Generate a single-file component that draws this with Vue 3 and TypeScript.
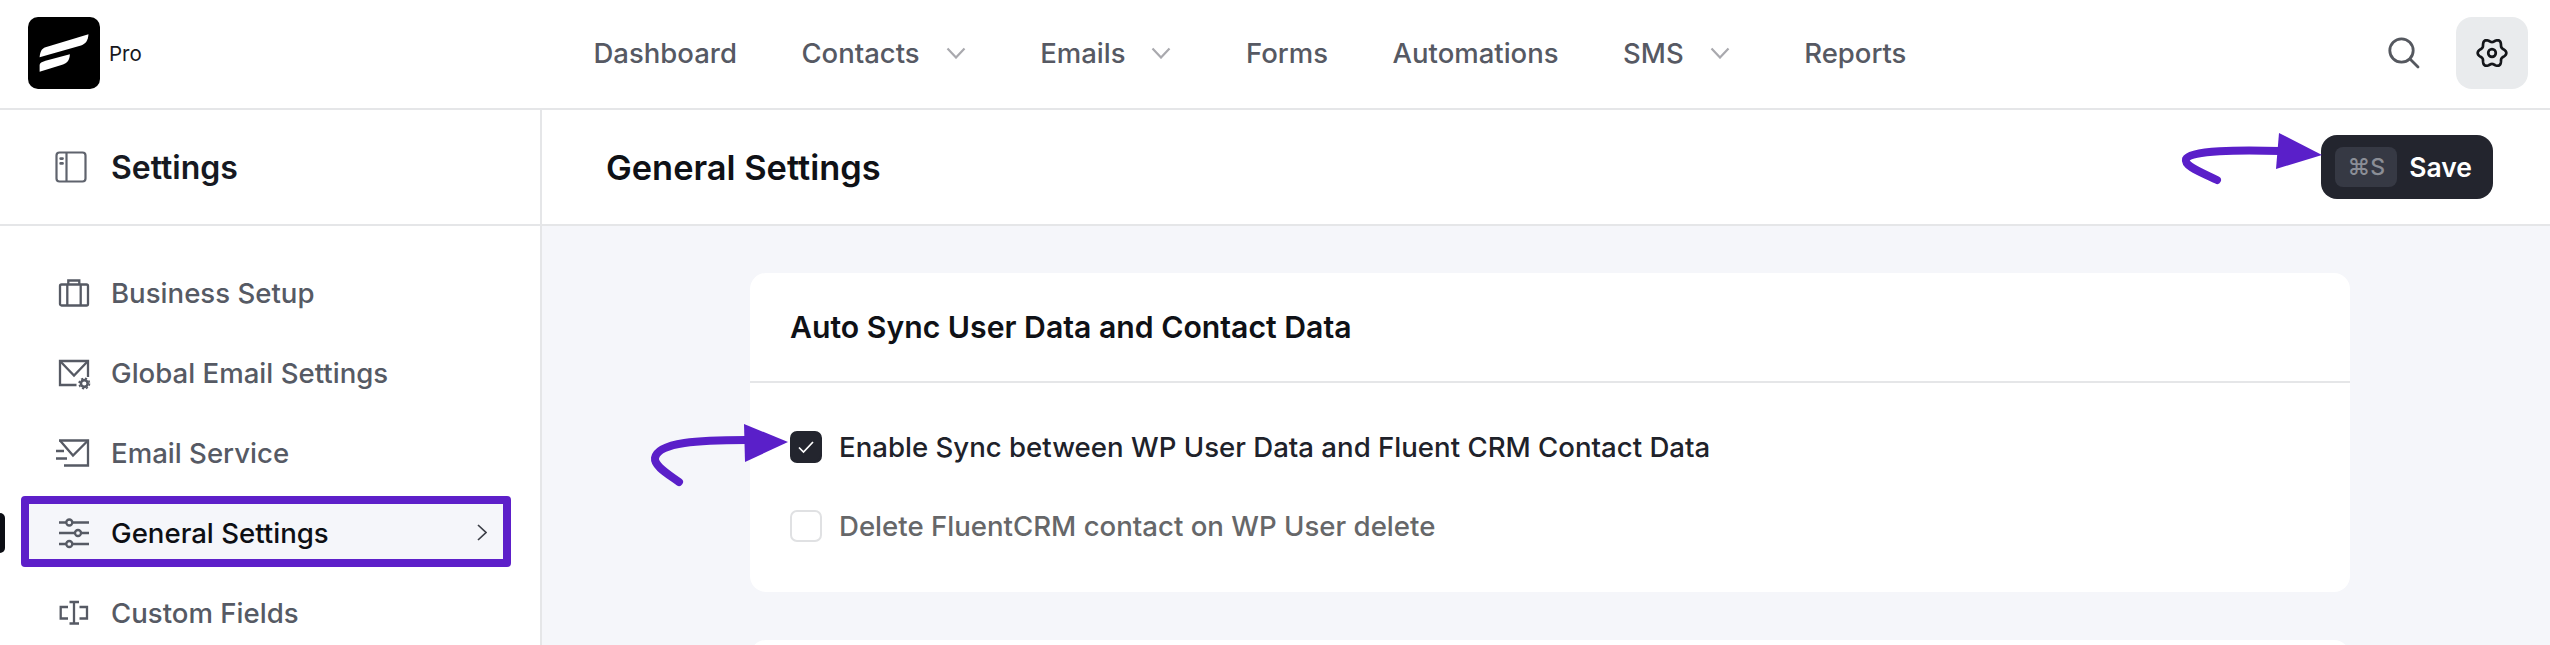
<script setup lang="ts">
interface NavItem { label: string; caret?: boolean }
const nav: NavItem[] = [
  { label: 'Dashboard' },
  { label: 'Contacts', caret: true },
  { label: 'Emails', caret: true },
  { label: 'Forms' },
  { label: 'Automations' },
  { label: 'SMS', caret: true },
  { label: 'Reports' },
]
const side = [
  { key: 'biz', label: 'Business Setup' },
  { key: 'mail', label: 'Global Email Settings' },
  { key: 'send', label: 'Email Service' },
  { key: 'gen', label: 'General Settings', active: true },
  { key: 'fields', label: 'Custom Fields' },
]
// Six-lobed cog outline of the settings button
const gearPath = Array.from({ length: 120 }, (_, i) => {
  const a = (i / 120) * Math.PI * 2
  const r = 12.6 + 1.7 * Math.cos(6 * a)
  return `${i ? 'L' : 'M'}${(16 + r * Math.cos(a)).toFixed(2)} ${(16 + r * Math.sin(a)).toFixed(2)}`
}).join('') + 'Z'
</script>

<template>
  <div class="page">
    <header class="top">
      <div class="brand">
        <svg class="logo" viewBox="28 17 72 72" width="72" height="72">
          <rect x="28" y="17" width="72" height="72" rx="10" fill="#000" />
          <path d="M39.6 57.3C40 52 41.5 48.5 45.5 47.2L88.5 34.3C88 40 86 44 81 45.5Z" fill="#fff" />
          <path d="M39.6 71.7V65C40 63 41.5 62 45.5 60.8L69.9 54.3C69.5 60 67.5 63 63 64.5Z" fill="#fff" />
        </svg>
        <span class="pro">Pro</span>
      </div>
      <nav class="nav">
        <a v-for="n in nav" :key="n.label" class="nav-item">
          <span>{{ n.label }}</span>
          <svg v-if="n.caret" class="caret" width="20" height="12" viewBox="0 0 20 12" fill="none">
            <path d="M1.5 1.5L10 10.5L18.5 1.5" stroke="#a9a9ae" stroke-width="2.2" />
          </svg>
        </a>
      </nav>
      <div class="tools">
        <svg class="search" width="32" height="32" viewBox="0 0 32 32" fill="none" stroke="#55585f" stroke-width="2.8">
          <circle cx="13.5" cy="13.5" r="11.7" />
          <path d="M22 22L30 30" stroke-linecap="round" />
        </svg>
        <button class="gear" type="button">
          <svg width="32" height="32" viewBox="0 0 32 32" fill="none" stroke="#14161a" stroke-width="2.7" stroke-linejoin="round">
            <path :d="gearPath" />
            <circle cx="16" cy="16" r="3.8" />
          </svg>
        </button>
      </div>
    </header>

    <div class="body">
      <aside class="sidebar">
        <div class="side-head">
          <svg width="32" height="32" viewBox="0 0 32 32" fill="none" stroke="#5f636d" stroke-width="2.2">
            <rect x="1.5" y="1.5" width="29" height="29" rx="3" />
            <path d="M11.5 2V30" />
            <path d="M5.6 7.6H7.6M5.6 12.4H7.6" stroke-width="2.6" stroke-linecap="round" />
          </svg>
          <span>Settings</span>
        </div>
        <ul class="side-list">
          <li v-for="s in side" :key="s.key" class="side-item" :class="{ active: s.active }">
            <span v-if="s.active" class="pill"></span>
            <svg class="side-icon" width="32" height="32" viewBox="0 0 32 32" fill="none" stroke="#565a64" stroke-width="2.3">
              <template v-if="s.key === 'biz'">
                <rect x="3" y="7.5" width="28" height="21" rx="1.5" />
                <path d="M11.3 7.5V3.5H22.3V7.5M10.3 7.5V28.5M23.7 7.5V28.5" />
              </template>
              <template v-else-if="s.key === 'mail'">
                <path d="M19.5 28H3V4H31V20" />
                <path d="M3 4L17 18.5L31 4" />
                <circle cx="27.3" cy="26.5" r="3.4" stroke-width="2.6" />
                <circle cx="27.3" cy="26.5" r="5.2" stroke-width="1.6" stroke-dasharray="2.2 1.9" />
              </template>
              <template v-else-if="s.key === 'send'">
                <path d="M2 3.5H31V28.5H7" />
                <path d="M3 3.5L16 18.5L31 3.5" />
                <path d="M-1 14H7M-1 21.5H10" />
              </template>
              <template v-else-if="s.key === 'gen'">
                <path d="M2 5.5H9M15.5 5.5H32M2 16H18M24 16H32M2 27H9M15.5 27H32" />
                <circle cx="12.3" cy="5.5" r="3" />
                <circle cx="21" cy="16" r="3" />
                <circle cx="12.3" cy="27" r="3" />
              </template>
              <template v-else>
                <path d="M11 10H3.7V21.5H11M22.5 10H30V21.5H22.5" />
                <path d="M12.5 5H22M12.5 26.5H22M17 5V26.5" />
              </template>
            </svg>
            <span class="side-label">{{ s.label }}</span>
            <svg v-if="s.active" class="side-arrow" width="10" height="17" viewBox="0 0 10 17" fill="none">
              <path d="M1 1L9 8.5L1 16" stroke="#3b3e46" stroke-width="1.7" />
            </svg>
          </li>
        </ul>
      </aside>

      <main class="main">
        <div class="main-head">
          <h1>General Settings</h1>
          <button class="save" type="button">
            <kbd>⌘S</kbd>
            <span>Save</span>
          </button>
        </div>
        <div class="content">
          <section class="card">
            <h2 class="card-title">Auto Sync User Data and Contact Data</h2>
            <div class="card-body">
              <label class="check on">
                <span class="box">
                  <svg width="18" height="14" viewBox="0 0 18 14" fill="none">
                    <path d="M2 7.5L6.5 12L16 2" stroke="#fff" stroke-width="1.7" />
                  </svg>
                </span>
                Enable Sync between WP User Data and Fluent CRM Contact Data
              </label>
              <label class="check">
                <span class="box"></span>
                Delete FluentCRM contact on WP User delete
              </label>
            </div>
          </section>
          <section class="card next"></section>
        </div>
      </main>
    </div>

    <svg class="marks" width="2550" height="645" viewBox="0 0 2550 645" fill="none">
      <path d="M2217 180C2200 172 2184 166 2186 159C2190 150 2240 150 2280 151" stroke="#5a1fc9" stroke-width="8" stroke-linecap="round" />
      <path d="M2279 133L2322 155L2276 169Z" fill="#5a1fc9" />
      <path d="M679 482C668 474 654 466 655 458C658 442 700 440 746 440" stroke="#5a1fc9" stroke-width="8" stroke-linecap="round" />
      <path d="M744 424L788 442L745 462Z" fill="#5a1fc9" />
    </svg>
  </div>
</template>

<style>
html, body { margin: 0; background: #fff; }
</style>

<style scoped>
.page {
  position: relative;
  width: 2550px;
  height: 645px;
  overflow: hidden;
  background: #fff;
  font-family: Inter, "Liberation Sans", sans-serif;
  color: #14161c;
}
.top {
  display: flex;
  align-items: center;
  height: 110px;
  box-sizing: border-box;
  border-bottom: 2px solid #e5e6e8;
  padding: 0 22px 2px 28px;
}
.brand { display: flex; align-items: center; width: 565.5px; }
.logo { display: block; flex: none; }
.pro { margin-left: 9px; font-size: 20.5px; color: #17181c; }
.nav { display: flex; align-items: center; gap: 64.5px; flex: 1; }
.nav-item {
  display: flex;
  align-items: center;
  gap: 26px;
  font-size: 27.5px;
  font-weight: 500;
  color: #565963;
}
.caret { margin-right: 10px; }
.tools { display: flex; align-items: center; gap: 36px; }
.search { display: block; }
.gear {
  display: flex;
  align-items: center;
  justify-content: center;
  width: 72px;
  height: 72px;
  padding: 0;
  border: 0;
  border-radius: 16px;
  background: #e9ebed;
}
.body { display: flex; }
.sidebar {
  width: 542px;
  flex: none;
  box-sizing: border-box;
  border-right: 2px solid #e5e6e8;
  height: 535px;
}
.side-head {
  display: flex;
  align-items: center;
  gap: 24px;
  height: 116px;
  box-sizing: border-box;
  border-bottom: 2px solid #e5e6e8;
  padding-left: 55px;
  font-size: 32px;
  font-weight: 600;
  color: #161922;
}
.side-list {
  list-style: none;
  margin: 0;
  padding: 30px 0 0 21px;
  display: flex;
  flex-direction: column;
  gap: 9px;
}
.side-item {
  position: relative;
  display: flex;
  align-items: center;
  width: 490px;
  height: 71px;
  flex: none;
  box-sizing: border-box;
  border: 8px solid transparent;
  border-radius: 4px;
  padding: 2px 0 0 28px;
  font-size: 27.6px;
  font-weight: 500;
  color: #565a64;
}
.side-item.active {
  border-color: #5d1fc9;
  background: #f5f6fa;
  color: #0d0f14;
}
.side-icon { flex: none; margin-right: 22px; overflow: visible; }
.side-arrow { margin-left: auto; margin-right: 16px; }
.pill {
  position: absolute;
  left: -29px;
  top: 9px;
  width: 5px;
  height: 40px;
  border-radius: 0 6px 6px 0;
  background: #0c0e14;
}
.main { flex: 1; min-width: 0; background: #f5f6fa; height: 535px; }
.main-head {
  display: flex;
  align-items: center;
  justify-content: space-between;
  height: 116px;
  box-sizing: border-box;
  background: #fff;
  border-bottom: 2px solid #e5e6e8;
  padding: 0 57px 0 64px;
}
h1 { margin: 0; font-size: 34.4px; font-weight: 600; color: #0f1116; }
.save {
  display: flex;
  align-items: center;
  gap: 12px;
  height: 64px;
  padding: 0 21px 0 14px;
  border: 0;
  border-radius: 16px;
  background: #23252e;
  color: #fff;
  font: 600 26.5px Inter, "Liberation Sans", sans-serif;
}
kbd {
  display: flex;
  align-items: center;
  justify-content: center;
  width: 62px;
  height: 40px;
  border-radius: 8px;
  background: #363944;
  color: #8b8e96;
  font: 500 23px Inter, "Noto Sans", sans-serif;
}
.content { padding: 47px 0 0 208px; }
.card {
  width: 1600px;
  background: #fff;
  border-radius: 16px;
}
.card.next { margin-top: 48px; height: 40px; }
.card-title {
  margin: 0;
  height: 110px;
  box-sizing: border-box;
  display: flex;
  align-items: center;
  padding-left: 40px;
  border-bottom: 2px solid #e5e6e8;
  font-size: 30.2px;
  font-weight: 600;
  color: #0f1116;
}
.card-body {
  display: flex;
  flex-direction: column;
  gap: 47px;
  padding: 48px 40px 50px;
}
.check {
  display: flex;
  align-items: center;
  gap: 17px;
  font-size: 27.6px;
  font-weight: 500;
  color: #666769;
  height: 32px;
}
.check.on { color: #20222a; }
.box {
  display: flex;
  align-items: center;
  justify-content: center;
  width: 32px;
  height: 32px;
  flex: none;
  box-sizing: border-box;
  border: 2px solid #e0e1e3;
  border-radius: 7px;
  background: #fff;
}
.check.on .box { background: #23252e; border-color: #23252e; }
.marks { position: absolute; left: 0; top: 0; pointer-events: none; }
</style>
